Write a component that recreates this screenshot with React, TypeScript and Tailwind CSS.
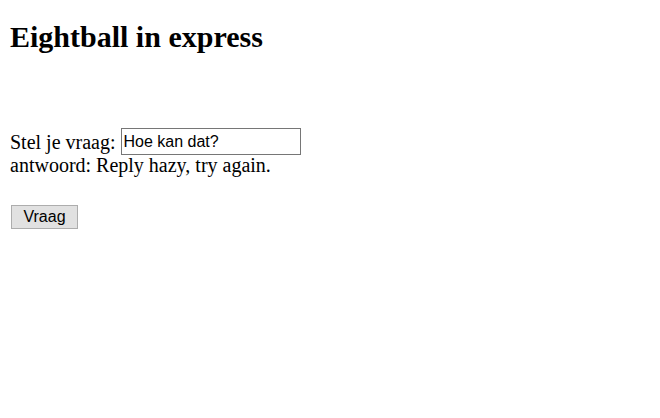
import { useEffect, useRef } from 'react';

export default function App() {
  const vraagRef = useRef<HTMLInputElement>(null);

  // the field has focus in the screenshot, cursor after the text
  useEffect(() => {
    const el = vraagRef.current;
    if (!el) return;
    el.focus();
    el.setSelectionRange(el.value.length, el.value.length);
  }, []);

  return (
    <div className="min-h-[418px] bg-white pl-[10px] pt-[19px] text-black font-['Liberation_Serif',serif] text-[20px]">
      <h1 className="text-[30px] font-bold leading-[35px]">Eightball in express</h1>
      <form className="mt-[74px]" onSubmit={(e) => e.preventDefault()}>
        <div className="h-[26px] leading-[23px]">
          Stel je vraag:{' '}
          <input
            ref={vraagRef}
            type="text"
            defaultValue="Hoe kan dat?"
            className="h-[27px] w-[180px] border border-[#767676] px-[2px] align-[2px] font-['Liberation_Sans',Arial,sans-serif] text-base leading-[18px] text-black caret-black outline-none"
          />
        </div>
        <div className="leading-[23px]">antwoord: Reply hazy, try again.</div>
        <button
          type="submit"
          className="ml-[1px] mt-[28px] h-[24px] w-[67px] border border-[#adadad] bg-[#e1e1e1] font-['Liberation_Sans',Arial,sans-serif] text-base leading-[18px] text-black"
        >
          Vraag
        </button>
      </form>
    </div>
  );
}
